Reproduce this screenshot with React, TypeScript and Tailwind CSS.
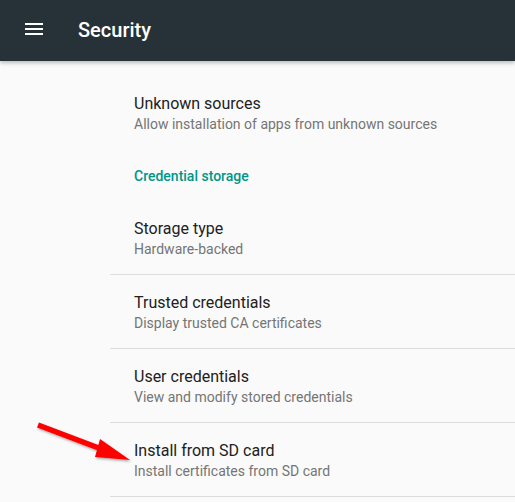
import React from 'react'

type Item = { title: string; summary: string }

const credentialItems: Item[] = [
  { title: 'Storage type', summary: 'Hardware-backed' },
  { title: 'Trusted credentials', summary: 'Display trusted CA certificates' },
  { title: 'User credentials', summary: 'View and modify stored credentials' },
  { title: 'Install from SD card', summary: 'Install certificates from SD card' },
]

function MenuIcon() {
  return (
    <svg width="24" height="24" viewBox="0 0 24 24" fill="#ffffff">
      <path d="M3 18h18v-2H3v2zm0-5h18v-2H3v2zm0-7v2h18V6H3z" />
    </svg>
  )
}

function Pref({ title, summary }: Item) {
  return (
    <div className="pl-[24px] pt-[18px] pb-[15px] border-b border-[#dcdcdc]">
      <div className="text-[16px] leading-[20px] text-[#212121]">{title}</div>
      <div className="text-[14px] leading-[20px] text-[#757575]">{summary}</div>
    </div>
  )
}

export default function App() {
  return (
    <div
      className="relative w-[515px] h-[502px] overflow-hidden bg-[#fafafa]"
      style={{ fontFamily: 'Roboto, "Noto Sans", sans-serif' }}
    >
      <header className="relative z-10 h-[61px] bg-[#263238] flex items-start pt-[17px] pl-[22px] shadow-[0_2px_4px_rgba(0,0,0,0.25)]">
        <MenuIcon />
        <h1 className="ml-[32px] mt-[1px] text-[20px] leading-[24px] font-medium text-white">Security</h1>
      </header>

      <main className="ml-[110px]">
        <div className="pl-[24px] pt-[33px]">
          <div className="text-[16px] leading-[20px] text-[#212121]">Unknown sources</div>
          <div className="text-[14px] leading-[20px] text-[#757575]">
            Allow installation of apps from unknown sources
          </div>
        </div>

        <div className="pl-[24px] mt-[32px] mb-[15px] text-[14px] leading-[20px] font-medium text-[#009688]">
          Credential storage
        </div>

        {credentialItems.map((it) => (
          <Pref key={it.title} {...it} />
        ))}
      </main>

      {/* red annotation arrow */}
      <svg className="absolute left-0 top-0" width="515" height="502" viewBox="0 0 515 502">
        <defs>
          <filter id="sh" x="-20%" y="-20%" width="140%" height="140%">
            <feDropShadow dx="1" dy="1.5" stdDeviation="1.2" floodColor="#000" floodOpacity="0.35" />
          </filter>
        </defs>
        <g filter="url(#sh)" fill="#ff0000" stroke="none">
          <line x1="38" y1="425" x2="104" y2="450" stroke="#ff0000" strokeWidth="5.5" strokeLinecap="butt" />
          <polygon points="130,460 100,439 95,457" />
        </g>
      </svg>
    </div>
  )
}
